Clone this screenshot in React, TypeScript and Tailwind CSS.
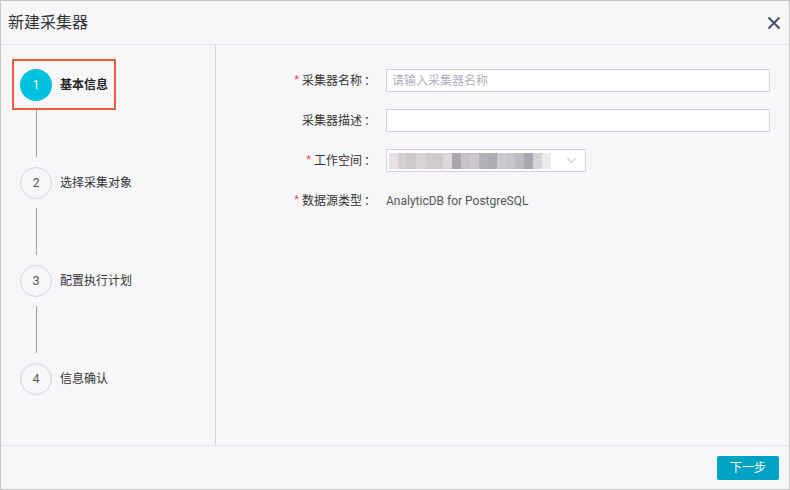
import { ChevronDown } from "lucide-react";

const steps = [
  { n: 1, label: "基本信息" },
  { n: 2, label: "选择采集对象" },
  { n: 3, label: "配置执行计划" },
  { n: 4, label: "信息确认" },
];

const blur = [
  "#e6e0e2", "#d4cfd3", "#cdc8cc", "#d8d4d8", "#d0ccd0", "#cfcbcf", "#dcd8dc", "#a9a6ad",
  "#c4c3ca", "#cbc6cc", "#b4b1b8", "#aeabb2", "#cdcacf", "#c8c6cb", "#bdbac0", "#a9a6ae", "#d6d3d7", "#ecebee",
];

function Label({ text, required }: { text: string; required?: boolean }) {
  return (
    <div className="w-[106px] shrink-0 flex justify-end items-center text-[12px] text-[#333] mr-[10px]">
      {required && <span className="text-[#f04a5c] mr-[3px] text-[11px]">*</span>}
      <span>{text}</span>
      <span className="ml-[2px]">：</span>
    </div>
  );
}

export default function App() {
  return (
    <div
      className="w-[790px] h-[490px] bg-[#f7f7fa] border border-[#c4c4c4] flex flex-col"
      style={{ fontFamily: '"Roboto", "Noto Sans CJK SC", sans-serif' }}
    >
      <div className="h-[44px] shrink-0 flex items-center justify-between pl-[7px] pr-[8px] border-b border-[#e3e3ef]">
        <span className="text-[16px] text-[#333]">新建采集器</span>
        <svg width="14" height="14" viewBox="0 0 14 14" className="text-[#4a5066]">
          <path d="M1.5 1.5 L12.5 12.5 M12.5 1.5 L1.5 12.5" stroke="currentColor" strokeWidth="2" />
        </svg>
      </div>

      <div className="flex-1 flex min-h-0">
        <div className="w-[215px] shrink-0 border-r border-[#d4d4e0] pt-[14px] pl-[11px]">
          {steps.map((s, i) => (
            <div key={s.n} className="flex flex-col">
              <div
                className={
                  s.n === 1
                    ? "w-[104px] h-[51px] border-[2px] border-[#f05a3c] flex items-center pl-[6px] gap-[8px]"
                    : "h-[51px] flex items-center pl-[8px] gap-[8px]"
                }
              >
                {s.n === 1 ? (
                  <div className="w-[32px] h-[32px] shrink-0 rounded-full bg-[#00c1de] text-white text-[12px] flex items-center justify-center">
                    1
                  </div>
                ) : (
                  <div className="w-[32px] h-[32px] shrink-0 rounded-full border border-[#d2d4e6] text-[#555] text-[12px] flex items-center justify-center">
                    {s.n}
                  </div>
                )}
                <span className={s.n === 1 ? "text-[12px] font-bold text-[#222] whitespace-nowrap" : "text-[12px] text-[#333] whitespace-nowrap"}>
                  {s.label}
                </span>
              </div>
              {i < steps.length - 1 && <div className="h-[47px] ml-[24px] w-px bg-[#9ea0bb]" />}
            </div>
          ))}
        </div>

        <div className="flex-1 pt-[24px] pl-[54px] pr-[19px] flex flex-col gap-[17px]">
          <div className="flex items-center h-[23px]">
            <Label text="采集器名称" required />
            <div className="flex-1 h-[23px] bg-white border border-[#d0d2e4] flex items-center px-[5px] text-[12px] text-[#b0b0bc]">
              请输入采集器名称
            </div>
          </div>
          <div className="flex items-center h-[23px]">
            <Label text="采集器描述" />
            <div className="flex-1 h-[23px] bg-white border border-[#d0d2e4]" />
          </div>
          <div className="flex items-center h-[23px]">
            <Label text="工作空间" required />
            <div className="w-[200px] h-[23px] bg-white border border-[#d0d2e4] flex items-center pl-[2px] pr-[6px] justify-between">
              <div className="flex h-[16px] blur-[0.6px]">
                {blur.map((c, k) => (
                  <div key={k} className="w-[9px] h-full" style={{ background: c }} />
                ))}
              </div>
              <ChevronDown size={15} className="text-[#c8cadb]" strokeWidth={2} />
            </div>
          </div>
          <div className="flex items-center h-[23px]">
            <Label text="数据源类型" required />
            <span className="text-[12px] text-[#555]">AnalyticDB for PostgreSQL</span>
          </div>
        </div>
      </div>

      <div className="h-[44px] shrink-0 border-t border-[#e3e3ef] flex items-center justify-end pr-[10px]">
        <button className="w-[62px] h-[24px] bg-[#00a2c4] text-white text-[12px] rounded-[2px]">下一步</button>
      </div>
    </div>
  );
}
